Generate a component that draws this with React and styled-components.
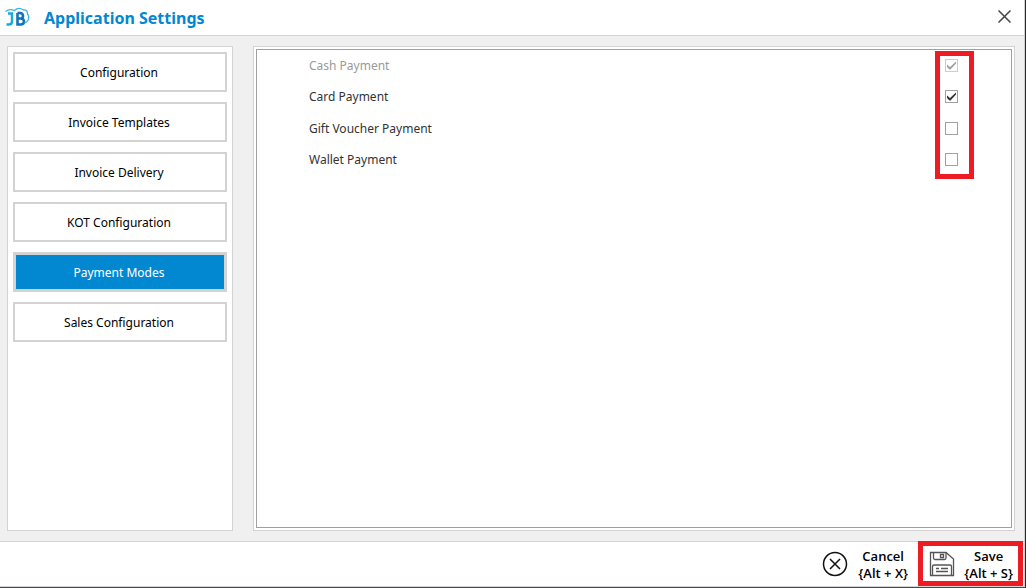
import React, { useState } from 'react';
import styled, { createGlobalStyle } from 'styled-components';

const GlobalStyle = createGlobalStyle`
  *, *::before, *::after { box-sizing: border-box; }
  body { margin: 0; background: #fff; }
  body, button, input { font-family: "Noto Sans", "Open Sans", sans-serif; font-size: 12px; }
`;

const Window = styled.div`
  display: flex;
  flex-direction: column;
  min-height: 100vh;
  background: #fff;
  border-right: 1px solid #26282d;
  border-bottom: 1px solid #46484c;
`;

const TitleBar = styled.header`
  display: flex;
  align-items: center;
  height: 36px;
  padding: 0 13px 0 5px;
  border-bottom: 1px solid #d3d3d3;
  border-right: 1px solid #d3d3d3;
`;

const Title = styled.h1`
  flex: 1;
  margin: 0 0 0 14px;
  color: #0288d1;
  font-size: 16px;
  line-height: 24px;
  font-weight: 700;
`;

const CloseButton = styled.button`
  display: flex;
  padding: 0;
  border: 0;
  background: none;
  margin-bottom: 3px;
`;

const Body = styled.main`
  flex: 1;
  display: flex;
  gap: 20px;
  padding: 10px 9px 10px 7px;
  background: #f0f0f0;
  border-right: 1px solid #d3d3d3;
`;

const Sidebar = styled.nav`
  display: flex;
  flex-direction: column;
  gap: 10px;
  width: 226px;
  padding: 5px;
  border: 1px solid #d3d3d3;
  background: #fff;
`;

const NavButton = styled.button`
  height: 40px;
  padding: 0 2px 0 0;
  border: ${(p) => (p.$active ? 3 : 2)}px solid #d3d3d3;
  background: ${(p) => (p.$active ? '#0288d1' : '#fff')};
  color: ${(p) => (p.$active ? '#fff' : '#000')};
`;

const Content = styled.section`
  flex: 1;
  display: flex;
  padding: 2px;
  border: 1px solid #d3d3d3;
  background: #fff;
`;

const Panel = styled.div`
  flex: 1;
  border: 1px solid #a0a0a0;
`;

const ModeList = styled.div`
  position: relative;
  display: flex;
  flex-direction: column;
  height: 125px;
  padding: 0 53px 0 52px;
`;

const ModeRow = styled.label`
  flex: 1;
  display: flex;
  align-items: center;
  justify-content: space-between;
  line-height: 19px;
  color: ${(p) => (p.$disabled ? '#9a9a9a' : '#333')};
`;

const CheckBox = styled.span`
  position: relative;
  display: flex;
  width: 13px;
  height: 13px;
`;

const CheckInput = styled.input`
  appearance: none;
  width: 13px;
  height: 13px;
  margin: 0;
  border: 1px solid #a0a0a0;
  background: #fff;
  &:disabled { border-color: #ccc; }
`;

const CheckMark = styled.svg`
  position: absolute;
  inset: 0;
  pointer-events: none;
  color: ${(p) => (p.$disabled ? '#a0a0a0' : '#333')};
`;

const ModeHighlight = styled.div`
  position: absolute;
  top: 1px;
  right: 37px;
  width: 39px;
  height: 128px;
  border: 5px solid #ed1c24;
  pointer-events: none;
`;

const Footer = styled.footer`
  display: flex;
  justify-content: flex-end;
  height: 46px;
  padding-right: 1px;
  border-top: 1px solid #d3d3d3;
  border-bottom: 1px solid #d3d3d3;
  border-right: 1px solid #d3d3d3;
`;

const ActionButton = styled.button`
  position: relative;
  display: flex;
  align-items: center;
  justify-content: space-between;
  width: 105px;
  padding: 1px 10px 0 11px;
  border: 0;
  background: none;
  color: #000;
  font-family: "Open Sans", "Noto Sans", sans-serif;
  font-size: 13px;
  font-weight: 600;
  line-height: 17px;
`;

const ActionHighlight = styled.span`
  position: absolute;
  inset: -1px 0 0;
  border: 5px solid #ed1c24;
  pointer-events: none;
`;

const Logo = () => (
  <svg width="25" height="22" viewBox="0 0 25 22" fill="none" aria-hidden="true">
    <path d="M3 6.500h4v8q0 3-3 3H1.500" stroke="#16a9df" strokeWidth="2.400" />
    <path d="M12.500 6v11.500h3q3.500 0 3.500-3t-3.500-3h-3m0 0h3q2.500 0 2.500-2.500T15.500 6h-3" stroke="#1272ba" strokeWidth="2.600" />
    <path d="M.5 4.500q4-3 9-1 4-4 9-.5 4-.5 4 4 3 4-1 8l-2 1" stroke="#3cb4e6" strokeWidth="1.300" />
  </svg>
);

const CloseIcon = () => (
  <svg width="13" height="13" viewBox="0 0 13 13" stroke="#444" strokeWidth="1.500" aria-hidden="true">
    <path d="M.5.5l12 12M12.500.5l-12 12" />
  </svg>
);

const CancelIcon = () => (
  <svg width="26" height="26" viewBox="2 1 26 26" fill="none" stroke="#111" strokeWidth="1.500" overflow="visible" aria-hidden="true">
    <circle cx="13" cy="13" r="11.500" />
    <path d="M8 8l10 10M18 8L8 18" />
  </svg>
);

const SaveIcon = () => (
  <svg width="26" height="26" viewBox="0 1 26 26" fill="none" stroke="#555" strokeWidth="1.300" overflow="visible" aria-hidden="true">
    <path d="M1.500 1.500h15.500l7.500 6.500v16.500h-23z" />
    <path d="M4.500 1.500v5.500q0 1.500 1.500 1.500h9.500q1.500 0 1.500-1.500V1.500" />
    <path d="M11.500 3.500h3v3h-3z" />
    <path d="M3.500 24.500v-9q0-1.500 1.500-1.500h16q1.500 0 1.500 1.500v9" />
    <path d="M7 17.500h3M12 17.500h7M7 20.500h12" />
  </svg>
);

const sections = [
  'Configuration', 'Invoice Templates', 'Invoice Delivery',
  'KOT Configuration', 'Payment Modes', 'Sales Configuration',
];

const paymentModes = [
  { name: 'Cash Payment', checked: true, disabled: true },
  { name: 'Card Payment', checked: true },
  { name: 'Gift Voucher Payment', checked: false },
  { name: 'Wallet Payment', checked: false },
];

function PaymentMode({ name, checked, disabled }) {
  const [on, setOn] = useState(checked);
  return (
    <ModeRow $disabled={disabled}>
      {name}
      <CheckBox>
        <CheckInput type="checkbox" checked={on} disabled={disabled} onChange={() => setOn(!on)} />
        {on && (
          <CheckMark $disabled={disabled} width="13" height="13" viewBox="0 0 13 13" fill="currentColor">
            <path d="M2 5.500l3 2.500 6-5.500v2L5.500 10.500H4.500L2 8z" />
          </CheckMark>
        )}
      </CheckBox>
    </ModeRow>
  );
}

export default function App() {
  const [active, setActive] = useState('Payment Modes');
  return (
    <Window>
      <GlobalStyle />
      <TitleBar>
        <Logo />
        <Title>Application Settings</Title>
        <CloseButton aria-label="Close"><CloseIcon /></CloseButton>
      </TitleBar>
      <Body>
        <Sidebar>
          {sections.map((s) => (
            <NavButton key={s} $active={s === active} onClick={() => setActive(s)}>{s}</NavButton>
          ))}
        </Sidebar>
        <Content>
          <Panel>
            <ModeList>
              {paymentModes.map((m) => <PaymentMode key={m.name} {...m} />)}
              <ModeHighlight />
            </ModeList>
          </Panel>
        </Content>
      </Body>
      <Footer>
        <ActionButton><CancelIcon /><span>Cancel<br />{'{Alt + X}'}</span></ActionButton>
        <ActionButton><SaveIcon /><span>Save<br />{'{Alt + S}'}</span><ActionHighlight /></ActionButton>
      </Footer>
    </Window>
  );
}
